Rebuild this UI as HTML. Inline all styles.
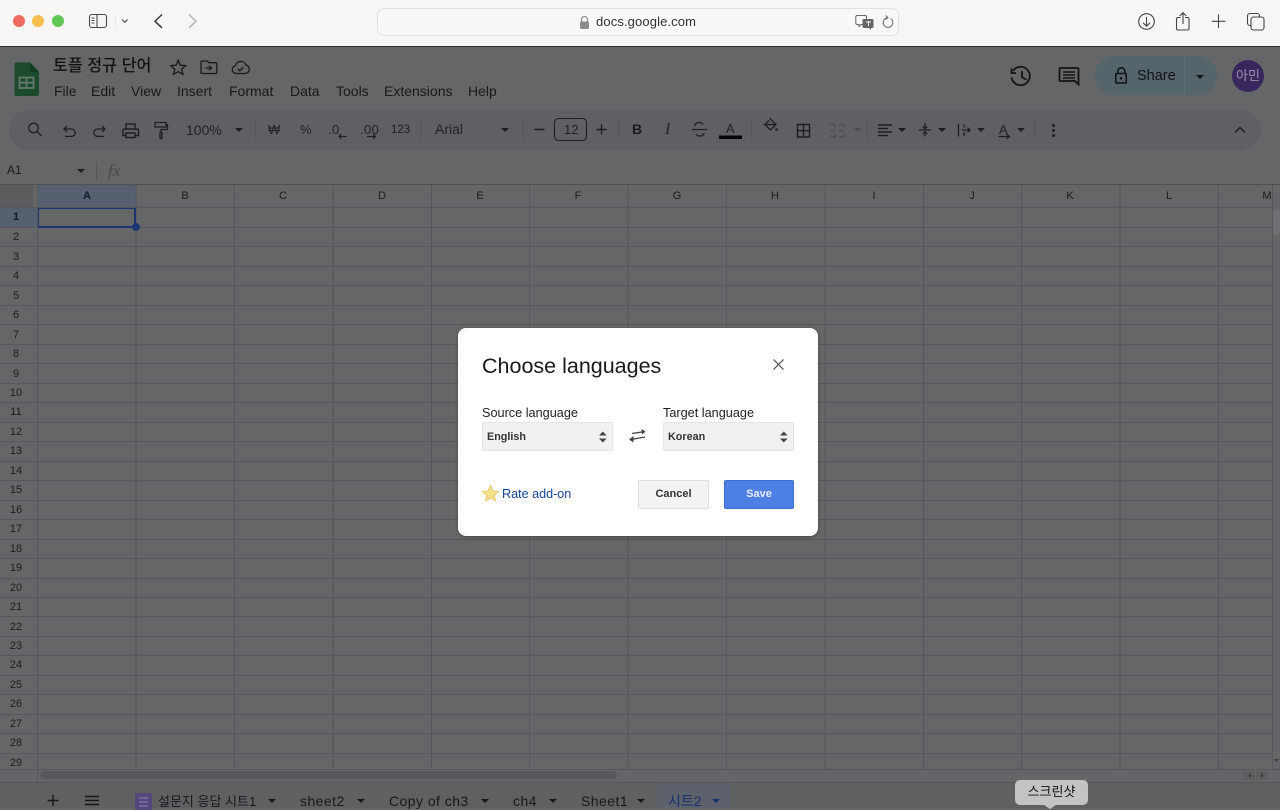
<!DOCTYPE html>
<html><head><meta charset="utf-8"><style>
html,body{margin:0;padding:0}
body{width:1280px;height:808px;overflow:hidden;position:relative;background:#656667;font-family:"Liberation Sans","Noto Sans CJK KR",sans-serif;color:#141517}
.a{position:absolute;white-space:nowrap}
svg{position:absolute;overflow:visible}
.m{top:83px;font-size:14px;line-height:17px;color:#18191b}
.t{top:123px;font-size:13px;line-height:15px;color:#202124}
.c{top:190px;width:98px;text-align:center;font-size:11px;line-height:13px;color:#1b1c1e}
.r{left:0;width:32px;text-align:center;font-size:11px;line-height:13px;color:#1b1c1e}
.s{top:793px;font-size:14px;line-height:17px;color:#17181a;letter-spacing:.45px}
.lab{font-size:12.7px;line-height:15px;color:#1f1f1f}
.sel{top:422px;width:129px;height:27px;background:#f1f1f1;border:1px solid #e4e4e4;border-radius:2px;font-weight:bold;font-size:10.8px;line-height:29px;text-indent:4px;color:#333}
</style></head><body>

<!-- browser bar -->
<div class="a" style="left:0;top:0;width:1280px;height:46px;background:#f7f6f4"></div>
<div class="a" style="left:0;top:46px;width:1280px;height:1px;background:#2e2e2e"></div>
<div class="a" style="left:13px;top:15px;width:12px;height:12px;border-radius:50%;background:#ec6a5e"></div>
<div class="a" style="left:32px;top:15px;width:12px;height:12px;border-radius:50%;background:#f4bf4f"></div>
<div class="a" style="left:52px;top:15px;width:12px;height:12px;border-radius:50%;background:#61c554"></div>
<svg style="left:0;top:0" width="320" height="46" fill="none" stroke="#4a4a4a" stroke-width="1.1">
<rect x="89.5" y="14.5" width="17" height="13" rx="2.5"/><path d="M97 14.5v13"/><path d="M91.5 18h3M91.5 20.5h3M91.5 23h3" stroke-width=".9"/>
<path d="M122 19.5l2.8 2.8 2.8-2.8" stroke-width="1.2"/>
<path d="M162 14.5l-7 6.7 7 6.7" stroke-width="1.5" stroke="#3b3b3b"/>
<path d="M189 14.5l7 6.7-7 6.7" stroke-width="1.5" stroke="#b3b3b3"/>
</svg>
<div class="a" style="left:115px;top:13px;width:1px;height:17px;background:#eaeaea"></div>
<div class="a" style="left:377px;top:8px;width:520px;height:26px;border:1px solid #e2e1df;border-radius:7px;background:#f9f8f6"></div>
<svg style="left:578px;top:15px" width="14" height="15" fill="none"><path d="M3.5 7V4.5a3 3 0 0 1 6 0V7" stroke="#8b8b8b" stroke-width="1.2"/><rect x="2" y="6.5" width="9" height="7.5" rx="1.2" fill="#8b8b8b"/></svg>
<div class="a" style="left:596px;top:14px;font-size:13px;line-height:16px;color:#333;letter-spacing:.12px">docs.google.com</div>
<svg style="left:855px;top:14px" width="40" height="16" fill="none">
<path d="M2 1.5h8a1.5 1.500 0 0 1 1.500 1.500v6a1.500 1.500 0 0 1-1.500 1.500H6l-2 2v-2H2A1.500 1.500 0 0 1 .8 9V3A1.500 1.500 0 0 1 2 1.500z" stroke="#666" stroke-width="1"/>
<path d="M9 5h8a1.500 1.500 0 0 1 1.500 1.500v6a1.500 1.500 0 0 1-1.500 1.500h-1v2l-2-2H9a1.500 1.500 0 0 1-1.500-1.500v-6A1.500 1.500 0 0 1 9 5z" fill="#666"/>
<path d="M11 8h5M13.500 7v5" stroke="#f7f6f4" stroke-width="1"/>
<path d="M35.500 4.500a4.800 4.800 0 1 1-3.500-.6M30.800 1.500l2.200 2.300-2.500 1.500" stroke="#666" stroke-width="1"/>
</svg>
<svg style="left:1130px;top:8px" width="140" height="28" fill="none" stroke="#454545" stroke-width="1.1">
<circle cx="16.500" cy="13.500" r="7.800"/><path d="M16.500 9v9M13 14.800l3.500 3.400 3.500-3.400"/>
<path d="M49.500 9.500h-2.500a1.500 1.500 0 0 0-1.500 1.500v9.500a1.500 1.500 0 0 0 1.500 1.500h9.500a1.500 1.500 0 0 0 1.500-1.500V11a1.500 1.500 0 0 0-1.500-1.500H54M52 16V5M48.700 8l3.300-3.300L55.300 8" transform="translate(1,0)"/>
<path d="M88.500 6.500v13.500M81.800 13.300h13.500"/>
<rect x="117.500" y="5.500" width="12" height="12" rx="2.500"/><rect x="121" y="9" width="13" height="13" rx="2.500" fill="#f7f6f4"/>
</svg>

<!-- docs header -->
<svg style="left:14px;top:62px" width="25" height="34">
<path d="M2.500 0.500h13.500l9 9.500v22a2 2 0 0 1-2 2H2.500a2 2 0 0 1-2-2v-29.500a2 2 0 0 1 2-2z" fill="#1c4a2c"/>
<path d="M16 .5v9.500h9z" fill="#173a24"/>
<path d="M5.500 15.500h14v10.500h-14zM5.500 20.700h14M12.500 15.500v10.500" fill="none" stroke="#64796b" stroke-width="1.800"/>
</svg>
<div class="a" style="left:53px;top:56px;font-size:16.200px;line-height:21px;color:#111214;font-weight:500">토플 정규 단어</div>
<svg style="left:168px;top:57px" width="90" height="20" fill="none" stroke="#191a1c" stroke-width="1.300">
<path d="M10.200 3.200l2.100 5 5.400.4-4.100 3.500 1.300 5.300-4.700-2.800-4.700 2.800 1.300-5.300-4.100-3.500 5.400-.4z"/>
<path d="M34 4h5.300l1.500 1.700h7a1 1 0 0 1 1 1v8.800a1 1 0 0 1-1 1H34a1 1 0 0 1-1-1V5a1 1 0 0 1 1-1z"/><path d="M37.500 11h6M41 8.700l2.500 2.300-2.500 2.300"/>
<path d="M68 16.500a4 4 0 0 1-.6-7.900 5.500 5.500 0 0 1 10.500-.6 4.300 4.300 0 0 1-.4 8.500z"/><path d="M69.800 11.800l2 2 3.500-3.500"/>
</svg>
<div class="a m" style="left:54px">File</div>
<div class="a m" style="left:91px">Edit</div>
<div class="a m" style="left:131px">View</div>
<div class="a m" style="left:177px">Insert</div>
<div class="a m" style="left:229px">Format</div>
<div class="a m" style="left:290px">Data</div>
<div class="a m" style="left:336px">Tools</div>
<div class="a m" style="left:384px">Extensions</div>
<div class="a m" style="left:468px">Help</div>

<svg style="left:1007px;top:62px" width="85" height="28" fill="none" stroke="#141517" stroke-width="1.800">
<path d="M6 8.800a9.200 9.200 0 1 1-1.500 6.500"/><path d="M4.500 6.500v4.500H9M15 9v6l4.500 2.700"/>
<path d="M53.500 6h17a1 1 0 0 1 1 1v15.500l-3.500-3.500H53.500a1 1 0 0 1-1-1V7a1 1 0 0 1 1-1z"/><path d="M56 10h12M56 13h12M56 16h12" stroke-width="1.400"/>
</svg>
<div class="a" style="left:1095px;top:56px;width:122px;height:39px;border-radius:20px;background:#56646c"></div>
<div class="a" style="left:1184px;top:56px;width:1px;height:39px;background:#5f6d75"></div>
<svg style="left:1114px;top:67px" width="15" height="18" fill="none" stroke="#101114" stroke-width="1.500"><path d="M3.800 6.500V4.300a3.500 3.500 0 0 1 7 0v2.200"/><rect x="1.800" y="6.500" width="10.500" height="9.500" rx="1"/><circle cx="7" cy="11.300" r="1.300" fill="#101114" stroke="none"/></svg>
<div class="a" style="left:1137px;top:67px;font-size:14.500px;line-height:18px;font-weight:500;color:#101218">Share</div>
<div class="a" style="left:1196px;top:75px;border:4px solid transparent;border-top:4px solid #101114;border-bottom:0"></div>
<div class="a" style="left:1232px;top:60px;width:32px;height:32px;border-radius:50%;background:#38275c;color:#9d93ae;font-size:13px;line-height:32px;text-align:center">아민</div>

<!-- toolbar -->
<div class="a" style="left:9px;top:110px;width:1252px;height:40px;border-radius:20px;background:#5e6063"></div>
<svg style="left:0;top:105px" width="1280" height="45" fill="none" stroke="#1e1f21" stroke-width="1.300">
<circle cx="33.500" cy="23" r="4.800"/><path d="M37 26.500l4.500 4.500"/>
<path d="M67 21l-3 3 3 3M64 24h7.500a3.700 3.700 0 0 1 0 7.400H65"/>
<path d="M102 21l3 3-3 3M105 24h-7.500a3.700 3.700 0 0 0 0 7.400H104"/>
<path d="M126 24v-5h9v5M123.500 24h14a1 1 0 0 1 1 1v5.500h-3.500M126.500 30.500h-3.500v-6.300M126 28h9v4.500h-9z" stroke-width="1.400"/>
<path d="M155 17.500h11v4.500h-11zM166 19.500h1.500v5h-6.500v3M160 27.500h2v6h-2z" stroke-width="1.300"/>
</svg>
<svg style="left:0;top:105px" width="1280" height="45" fill="none" stroke="#1e1f21" stroke-width="1.200">
<path d="M337.500 32.500h7M339.500 30l-2.500 2.500 2.500 2.500" transform="translate(2,-1)"/>
<path d="M367 32.500h8M373 30l2.500 2.500-2.500 2.500" transform="translate(0,-1)"/>
<path d="M534.500 24.500h10M596.500 24.500h10M601.500 19.500v10" stroke-width="1.400"/>
<rect x="554.500" y="13.500" width="32" height="22" rx="4" stroke-width="1.100"/>
<path d="M692 24.500h15"/>
<path d="M695 21a4 3 0 0 1 4.500-3.500q2.500 0 3.500 2M704 28a4 3 0 0 1-4.500 3q-2.500 0-3.500-2" stroke-width="1.300"/>
<path d="M769.500 13l6.500 6.500-5.500 5.500-5.500-5.500 4-4M763.500 19.500h12.500" stroke-width="1.300"/>
<circle cx="776.500" cy="24.500" r="1.300" fill="#1e1f21" stroke="none"/>
<path d="M797.500 19.500h12v12.500h-12zM803.500 19.500v12.500M797.500 25.700h12" stroke-width="1.400"/>
<path d="M830 19.500h5v3M830 32h5v-3M839 19.500h5v3M839 32h5v-3M830 25.700h5M839 25.700h5" stroke="#4b4c4e" stroke-width="1.200"/>
<path d="M878 20h14M878 23.500h10M878 27h14M878 30.500h10" stroke-width="1.400"/>
<path d="M919 25h12M925 18v5.500M922.700 21.500l2.300 2.300 2.300-2.300M925 31.500v-4.500M922.700 29l2.300-2.300 2.300 2.300" stroke-width="1.200"/>
<path d="M958.500 19v12.500M964 19.500v3M964 27v4M962 25h8M967.500 22.500l2.500 2.500-2.500 2.500" stroke-width="1.300"/>
<path d="M998.500 34.500h11M1006.500 32l3 2.500-3 2.500" transform="translate(0,-3)"/>
<path d="M1235 27.500l5-5 5 5" stroke-width="1.500"/>
</svg>
<svg style="left:0;top:105px" width="1280" height="45" fill="#1e1f21" stroke="none">
<path d="M235 23h8l-4 4zM501 23h8l-4 4zM898 23h8l-4 4zM938 23h8l-4 4zM977 23h8l-4 4zM1017 23h8l-4 4z"/>
<path d="M854 23h8l-4 4z" fill="#4b4c4e"/>
<rect x="719" y="30.500" width="23" height="3.500" fill="#050505"/>
<circle cx="1053.500" cy="20.500" r="1.500"/><circle cx="1053.500" cy="25.500" r="1.500"/><circle cx="1053.500" cy="30.500" r="1.500"/>
<rect x="255" y="15" width="1" height="19" fill="#54565a"/><rect x="420" y="15" width="1" height="19" fill="#54565a"/><rect x="523" y="15" width="1" height="19" fill="#54565a"/><rect x="618" y="15" width="1" height="19" fill="#54565a"/><rect x="751" y="15" width="1" height="19" fill="#54565a"/><rect x="867" y="15" width="1" height="19" fill="#54565a"/><rect x="1034" y="15" width="1" height="19" fill="#54565a"/>
</svg>
<div class="a t" style="left:186px;font-size:14px;top:123px">100%</div>
<div class="a t" style="left:268px;top:122px;font-size:13px">₩</div>
<div class="a t" style="left:300px;top:122px">%</div>
<div class="a t" style="left:328px;top:122px;letter-spacing:.4px">.0</div>
<div class="a t" style="left:360px;top:122px;letter-spacing:.4px">.00</div>
<div class="a t" style="left:391px;top:123px;font-size:11.500px">123</div>
<div class="a t" style="left:435px;top:122px;font-size:14px;color:#202124">Arial</div>
<div class="a t" style="left:564px;top:122px;font-size:13px">12</div>
<div class="a t" style="left:632px;top:122px;font-size:14px;font-weight:bold;color:#1b1c1e">B</div>
<div class="a t" style="left:665px;top:122px;font-size:16px;font-style:italic;font-family:'Liberation Serif',serif">I</div>
<div class="a t" style="left:726px;top:121px;font-size:13px">A</div>
<div class="a t" style="left:999px;top:122px;font-size:13px">A</div>

<!-- formula bar -->
<div class="a" style="left:7px;top:163px;font-size:12px;line-height:15px;color:#1b1c1e">A1</div>
<div class="a" style="left:77px;top:169px;border:4px solid transparent;border-top:4px solid #1e1f21;border-bottom:0"></div>
<div class="a" style="left:96px;top:162px;width:1px;height:19px;background:#565759"></div>
<div class="a" style="left:108px;top:162px;font-family:'Liberation Serif',serif;font-style:italic;font-size:17px;line-height:17px;color:#48494b">fx</div>

<!-- grid -->
<div class="a" style="left:0;top:184px;width:1280px;height:1px;background:#4f5051"></div>
<div class="a" style="left:0;top:185px;width:33px;height:22px;background:#5b5c5d"></div>
<div class="a" style="left:38px;top:185px;width:98px;height:22px;background:#56606f"></div>
<div class="a" style="left:0;top:208px;width:38px;height:19px;background:#56606f"></div>
<svg style="left:0;top:0" width="1280" height="808" stroke="#56575a" stroke-width="1" fill="none">
<path d="M37.500 185V782M136 185V769M234.500 185V769M333 185V769M431.500 185V769M529.500 185V769M628 185V769M726.500 185V769M825 185V769M923.500 185V769M1021.500 185V769M1120 185V769M1218.500 185V769M1272.500 185V769"/>
<path d="M0 207.500H1272M0 227.500H1272M0 246.500H1272M0 266.500H1272M0 285.500H1272M0 305.500H1272M0 324.500H1272M0 344.500H1272M0 363.500H1272M0 383.500H1272M0 402.500H1272M0 422.500H1272M0 441.500H1272M0 461.500H1272M0 480.500H1272M0 500.500H1272M0 519.500H1272M0 539.500H1272M0 558.500H1272M0 578.500H1272M0 597.500H1272M0 616.500H1272M0 636.500H1272M0 655.500H1272M0 675.500H1272M0 694.500H1272M0 714.500H1272M0 733.500H1272M0 753.500H1272M0 769.500H1280M0 782.500H1280"/>
</svg>
<div class="a c" style="left:38px;font-weight:bold;color:#0f1830">A</div>
<div class="a c" style="left:136px">B</div><div class="a c" style="left:234px">C</div><div class="a c" style="left:333px">D</div><div class="a c" style="left:431px">E</div><div class="a c" style="left:529px">F</div><div class="a c" style="left:628px">G</div><div class="a c" style="left:726px">H</div><div class="a c" style="left:825px">I</div><div class="a c" style="left:923px">J</div><div class="a c" style="left:1021px">K</div><div class="a c" style="left:1120px">L</div>
<div class="a c" style="left:1262px;width:10px">M</div>

<div class="a r" style="top:211px;font-weight:bold;color:#0f1830">1</div><div class="a r" style="top:231px">2</div><div class="a r" style="top:251px">3</div><div class="a r" style="top:270px">4</div><div class="a r" style="top:290px">5</div><div class="a r" style="top:309px">6</div><div class="a r" style="top:329px">7</div><div class="a r" style="top:348px">8</div><div class="a r" style="top:368px">9</div><div class="a r" style="top:387px">10</div><div class="a r" style="top:406px">11</div><div class="a r" style="top:426px">12</div><div class="a r" style="top:445px">13</div><div class="a r" style="top:465px">14</div><div class="a r" style="top:484px">15</div><div class="a r" style="top:504px">16</div><div class="a r" style="top:523px">17</div><div class="a r" style="top:543px">18</div><div class="a r" style="top:562px">19</div><div class="a r" style="top:582px">20</div><div class="a r" style="top:601px">21</div><div class="a r" style="top:621px">22</div><div class="a r" style="top:640px">23</div><div class="a r" style="top:659px">24</div><div class="a r" style="top:679px">25</div><div class="a r" style="top:698px">26</div><div class="a r" style="top:718px">27</div><div class="a r" style="top:737px">28</div><div class="a r" style="top:757px">29</div>

<div class="a" style="left:38px;top:208px;width:95px;height:17px;border:2px solid #1c3672;border-width:1.500px 2px 2px 1.500px"></div>
<div class="a" style="left:132px;top:223px;width:8px;height:8px;border-radius:50%;background:#1c3672"></div>

<div class="a" style="left:1273px;top:210px;width:7px;height:25px;border-radius:3px;background:#6f7071"></div>
<div class="a" style="left:40px;top:771px;width:577px;height:8px;border-radius:4px;background:#57585a"></div>
<div class="a" style="left:1243px;top:771px;width:12px;height:9px;background:#5d5e5f"></div>
<div class="a" style="left:1256px;top:771px;width:12px;height:9px;background:#5d5e5f"></div>
<svg style="left:1243px;top:771px" width="26" height="9" fill="#3f4041"><path d="M8 2v5l-3-2.500zM18 2v5l3-2.500z"/></svg>
<svg style="left:1272px;top:758px" width="8" height="6" fill="#3f4041"><path d="M2 1h5l-2.500 3z"/></svg>

<!-- sheets bar -->
<div class="a" style="left:0;top:783px;width:1280px;height:25px;background:#5f6062"></div>
<div class="a" style="left:657px;top:783px;width:74px;height:25px;background:#5c616b"></div>
<svg style="left:0;top:783px" width="1280" height="25" fill="none" stroke="#17181a" stroke-width="1.400">
<path d="M47.500 17.500h11M53 12v11"/><path d="M85 13.500h14M85 17.500h14M85 21.500h14"/>
<rect x="135" y="10" width="17" height="18" rx="2" fill="#54477c" stroke="none"/>
<path d="M139 15h9M139 19h9M139 23h9" stroke="#7d70a4" stroke-width="1.500"/>
<g fill="#17181a" stroke="none"><path d="M268 16h8l-4 4zM357 16h8l-4 4zM481 16h8l-4 4zM549 16h8l-4 4zM637 16h8l-4 4z"/><path d="M712 16h8l-4 4z" fill="#16306e"/></g>
</svg>
<div class="a s" style="left:158px;font-size:13px;letter-spacing:0">설문지 응답 시트1</div>
<div class="a s" style="left:300px">sheet2</div>
<div class="a s" style="left:389px">Copy of ch3</div>
<div class="a s" style="left:513px">ch4</div>
<div class="a s" style="left:581px">Sheet1</div>
<div class="a s" style="left:668px;color:#16306e;font-size:14px;letter-spacing:0">시트2</div>

<!-- tooltip -->
<div class="a" style="left:1015px;top:780px;width:73px;height:25px;border-radius:5px;background:#c3c3c3;color:#111;font-size:13px;line-height:24px;text-align:center">스크린샷</div>
<div class="a" style="left:1044px;top:805px;border:6px solid transparent;border-top:4px solid #c3c3c3;border-bottom:0"></div>

<!-- dialog -->
<div class="a" style="left:458px;top:328px;width:360px;height:208px;background:#fff;border-radius:8px;box-shadow:0 1px 3px rgba(0,0,0,.3)"></div>
<div class="a" style="left:482px;top:352px;font-size:21.500px;line-height:28px;color:#1a1a1a">Choose languages</div>
<svg style="left:772px;top:358px" width="13" height="13" stroke="#4a4a4a" stroke-width="1.200" fill="none"><path d="M1.500 1.500l10 10M11.500 1.500l-10 10"/></svg>
<div class="a lab" style="left:482px;top:406px">Source language</div>
<div class="a lab" style="left:663px;top:406px">Target language</div>
<div class="a sel" style="left:482px">English</div>
<div class="a sel" style="left:663px">Korean</div>
<svg style="left:597px;top:430px" width="200" height="15" fill="#444"><path d="M2 5.500l3.800-4 3.800 4zM2 8.500l3.800 4 3.800-4z"/><path d="M183 5.500l3.800-4 3.800 4zM183 8.500l3.800 4 3.800-4z"/></svg>
<svg style="left:628px;top:428px" width="20" height="16" fill="none" stroke="#444" stroke-width="1.300"><path d="M4 5.500l12-1.800"/><path d="M13.500 1l4 2.500-3.500 3" fill="#444" stroke="none"/><path d="M17 9L4 11.300"/><path d="M5.500 8l-4.500 3.500 4.500 3" fill="#444" stroke="none"/></svg>
<svg style="left:482px;top:485px" width="17" height="17"><path d="M8.500 0.500l2.400 5.300 5.800.6-4.300 3.900 1.200 5.700-5.100-2.900-5.100 2.900 1.200-5.700L.3 6.400l5.800-.6z" fill="#f6df8b" stroke="#e3c35c" stroke-width=".7"/></svg>
<div class="a" style="left:502px;top:487px;font-size:12.600px;line-height:15px;color:#15459a">Rate add-on</div>
<div class="a" style="left:638px;top:480px;width:69px;height:27px;background:#f3f3f3;border:1px solid #dfdfdf;border-radius:2px;font-weight:bold;font-size:11px;line-height:27px;text-align:center;color:#333">Cancel</div>
<div class="a" style="left:724px;top:480px;width:68px;height:27px;background:#4d7fe4;border:1px solid #3f6fd0;border-radius:2px;font-weight:bold;font-size:11px;line-height:27px;text-align:center;color:#e7eefb">Save</div>
</body></html>
